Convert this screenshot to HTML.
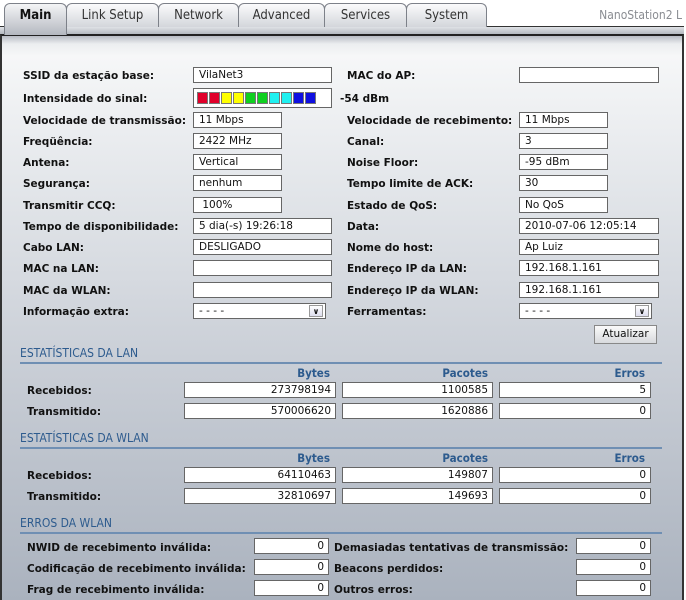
<!DOCTYPE html>
<html><head><meta charset="utf-8"><style>
*{margin:0;padding:0;box-sizing:border-box}
body{width:686px;height:600px;overflow:hidden;background:#fff;font-family:"DejaVu Sans","Liberation Sans",sans-serif;position:relative}
.frame{position:absolute;left:0;top:34px;width:684px;height:566px;border-left:2px solid #333;border-right:2px solid #333;border-top:2px solid #222;
background:linear-gradient(#b8bcc4 0px,#eceef0 8px,#f6f7f8 20px,#e3e6ea 150px,#c9ced6 330px,#aab2be 566px)}
.band{position:absolute;left:0;top:26px;width:684px;height:9px;border-top:1px solid #333;background:linear-gradient(#dfe2e6,#aeb3bb)}
.tab{position:absolute;top:3px;height:24px;border:1px solid #7d8189;border-bottom:none;border-radius:6px 6px 0 0;background:linear-gradient(#fbfbfc,#d3d6db);font-size:13px;color:#333;text-align:center;line-height:23px;font-family:"DejaVu Sans Condensed","DejaVu Sans",sans-serif}
.tab.on{height:32px;background:linear-gradient(#f4f5f6,#b4b8c0);z-index:2;font-weight:bold;color:#111}
.brand{position:absolute;right:4px;top:8px;font-size:12px;color:#8a8d92;font-family:"DejaVu Sans Condensed","DejaVu Sans",sans-serif}
.l{position:absolute;font-size:10.5px;font-weight:bold;color:#111;white-space:nowrap;line-height:14px;margin-top:1px}
.i{position:absolute;height:16px;background:#fff;border:1px solid #666;font-size:10.5px;line-height:15px;padding-left:5px;color:#111;white-space:nowrap}
.r{text-align:right;padding-right:4px}
.h{position:absolute;left:20px;width:642px;height:12px;font-size:12px;color:#2d5b8e;border-bottom:2px solid #6f8fb3;box-sizing:content-box;padding-bottom:3px;line-height:13px;font-family:"DejaVu Sans Condensed","DejaVu Sans",sans-serif}
.ch{position:absolute;font-size:11.5px;font-weight:bold;color:#2d5b8e;text-align:right;font-family:"DejaVu Sans Condensed","DejaVu Sans",sans-serif}
.sel .ar{position:absolute;right:2px;top:1px;width:14px;height:12px;border:1px solid #999;background:linear-gradient(#fff,#dde);font-size:8px;text-align:center;line-height:11px;font-weight:bold}
.sq{position:absolute;top:3px;width:11px;height:12px;border:1px solid #777}
</style></head><body>
<div class="band"></div>
<div class="tab on" style="left:4px;width:63px">Main</div>
<div class="tab" style="left:66px;width:93px">Link Setup</div>
<div class="tab" style="left:158px;width:81px">Network</div>
<div class="tab" style="left:238px;width:87px">Advanced</div>
<div class="tab" style="left:324px;width:83px">Services</div>
<div class="tab" style="left:406px;width:81px">System</div>
<div class="brand">NanoStation2 L</div>
<div class="frame"></div>

<div class="l" style="left:23px;top:68px">SSID da estação base:</div><div class="i" style="left:193px;top:67px;width:139px">VilaNet3</div>
<div class="l" style="left:347px;top:68px">MAC do AP:</div><div class="i" style="left:519px;top:67px;width:140px"></div>

<div class="l" style="left:23px;top:91px">Intensidade do sinal:</div>
<div class="i" style="left:193px;top:88px;width:139px;height:20px">
<div class="sq" style="left:3px;background:#e0002a"></div><div class="sq" style="left:15px;background:#e0002a"></div>
<div class="sq" style="left:27px;background:#ffff00"></div><div class="sq" style="left:39px;background:#ffff00"></div>
<div class="sq" style="left:51px;background:#10d020"></div><div class="sq" style="left:63px;background:#10d020"></div>
<div class="sq" style="left:75px;background:#20f0f0"></div><div class="sq" style="left:87px;background:#20f0f0"></div>
<div class="sq" style="left:99px;background:#1010e0"></div><div class="sq" style="left:111px;background:#1010e0"></div></div>
<div class="l" style="left:340px;top:91px">-54 dBm</div>

<div class="l" style="left:23px;top:113px">Velocidade de transmissão:</div><div class="i" style="left:193px;top:112px;width:89px">11 Mbps</div>
<div class="l" style="left:347px;top:113px">Velocidade de recebimento:</div><div class="i" style="left:519px;top:112px;width:89px">11 Mbps</div>
<div class="l" style="left:23px;top:134px">Freqüência:</div><div class="i" style="left:193px;top:133px;width:89px">2422 MHz</div>
<div class="l" style="left:347px;top:134px">Canal:</div><div class="i" style="left:519px;top:133px;width:89px">3</div>
<div class="l" style="left:23px;top:155px">Antena:</div><div class="i" style="left:193px;top:154px;width:89px">Vertical</div>
<div class="l" style="left:347px;top:155px">Noise Floor:</div><div class="i" style="left:519px;top:154px;width:89px">-95 dBm</div>
<div class="l" style="left:23px;top:176px">Segurança:</div><div class="i" style="left:193px;top:175px;width:89px">nenhum</div>
<div class="l" style="left:347px;top:176px">Tempo limite de ACK:</div><div class="i" style="left:519px;top:175px;width:89px">30</div>
<div class="l" style="left:23px;top:198px">Transmitir CCQ:</div><div class="i" style="left:193px;top:197px;width:89px">&nbsp;100%</div>
<div class="l" style="left:347px;top:198px">Estado de QoS:</div><div class="i" style="left:519px;top:197px;width:89px">No QoS</div>
<div class="l" style="left:23px;top:219px">Tempo de disponibilidade:</div><div class="i" style="left:193px;top:218px;width:139px">5 dia(-s) 19:26:18</div>
<div class="l" style="left:347px;top:219px">Data:</div><div class="i" style="left:519px;top:218px;width:140px">2010-07-06 12:05:14</div>
<div class="l" style="left:23px;top:240px">Cabo LAN:</div><div class="i" style="left:193px;top:239px;width:139px">DESLIGADO</div>
<div class="l" style="left:347px;top:240px">Nome do host:</div><div class="i" style="left:519px;top:239px;width:140px">Ap Luiz</div>
<div class="l" style="left:23px;top:261px">MAC na LAN:</div><div class="i" style="left:193px;top:260px;width:139px"></div>
<div class="l" style="left:347px;top:261px">Endereço IP da LAN:</div><div class="i" style="left:519px;top:260px;width:140px">192.168.1.161</div>
<div class="l" style="left:23px;top:283px">MAC da WLAN:</div><div class="i" style="left:193px;top:282px;width:139px"></div>
<div class="l" style="left:347px;top:283px">Endereço IP da WLAN:</div><div class="i" style="left:519px;top:282px;width:140px">192.168.1.161</div>
<div class="l" style="left:23px;top:304px">Informação extra:</div><div class="i sel" style="left:193px;top:303px;width:133px">- - - -<div class="ar">&#8744;</div></div>
<div class="l" style="left:347px;top:304px">Ferramentas:</div><div class="i sel" style="left:519px;top:303px;width:133px">- - - -<div class="ar">&#8744;</div></div>
<div class="i" style="left:594px;top:325px;width:63px;height:19px;background:linear-gradient(#fafafa,#d8dadd);border-color:#888;text-align:center;padding:0;line-height:17px;font-size:10.5px">Atualizar</div>

<div class="h" style="top:347px">ESTATÍSTICAS DA LAN</div>
<div class="ch" style="left:260px;top:366px;width:70px">Bytes</div>
<div class="ch" style="left:400px;top:366px;width:88px">Pacotes</div>
<div class="ch" style="left:575px;top:366px;width:70px">Erros</div>
<div class="l" style="left:27px;top:383px">Recebidos:</div>
<div class="i r" style="left:184px;top:382px;width:152px">273798194</div><div class="i r" style="left:342px;top:382px;width:151px">1100585</div><div class="i r" style="left:499px;top:382px;width:152px">5</div>
<div class="l" style="left:27px;top:404px">Transmitido:</div>
<div class="i r" style="left:184px;top:403px;width:152px">570006620</div><div class="i r" style="left:342px;top:403px;width:151px">1620886</div><div class="i r" style="left:499px;top:403px;width:152px">0</div>

<div class="h" style="top:432px">ESTATÍSTICAS DA WLAN</div>
<div class="ch" style="left:260px;top:451px;width:70px">Bytes</div>
<div class="ch" style="left:400px;top:451px;width:88px">Pacotes</div>
<div class="ch" style="left:575px;top:451px;width:70px">Erros</div>
<div class="l" style="left:27px;top:468px">Recebidos:</div>
<div class="i r" style="left:184px;top:467px;width:152px">64110463</div><div class="i r" style="left:342px;top:467px;width:151px">149807</div><div class="i r" style="left:499px;top:467px;width:152px">0</div>
<div class="l" style="left:27px;top:489px">Transmitido:</div>
<div class="i r" style="left:184px;top:488px;width:152px">32810697</div><div class="i r" style="left:342px;top:488px;width:151px">149693</div><div class="i r" style="left:499px;top:488px;width:152px">0</div>

<div class="h" style="top:517px">ERROS DA WLAN</div>
<div class="l" style="left:27px;top:540px">NWID de recebimento inválida:</div><div class="i r" style="left:254px;top:538px;width:75px">0</div>
<div class="l" style="left:334px;top:540px">Demasiadas tentativas de transmissão:</div><div class="i r" style="left:576px;top:538px;width:75px">0</div>
<div class="l" style="left:27px;top:561px">Codificação de recebimento inválida:</div><div class="i r" style="left:254px;top:559px;width:75px">0</div>
<div class="l" style="left:334px;top:561px">Beacons perdidos:</div><div class="i r" style="left:576px;top:559px;width:75px">0</div>
<div class="l" style="left:27px;top:582px">Frag de recebimento inválida:</div><div class="i r" style="left:254px;top:580px;width:75px">0</div>
<div class="l" style="left:334px;top:582px">Outros erros:</div><div class="i r" style="left:576px;top:580px;width:75px">0</div>
</body></html>
